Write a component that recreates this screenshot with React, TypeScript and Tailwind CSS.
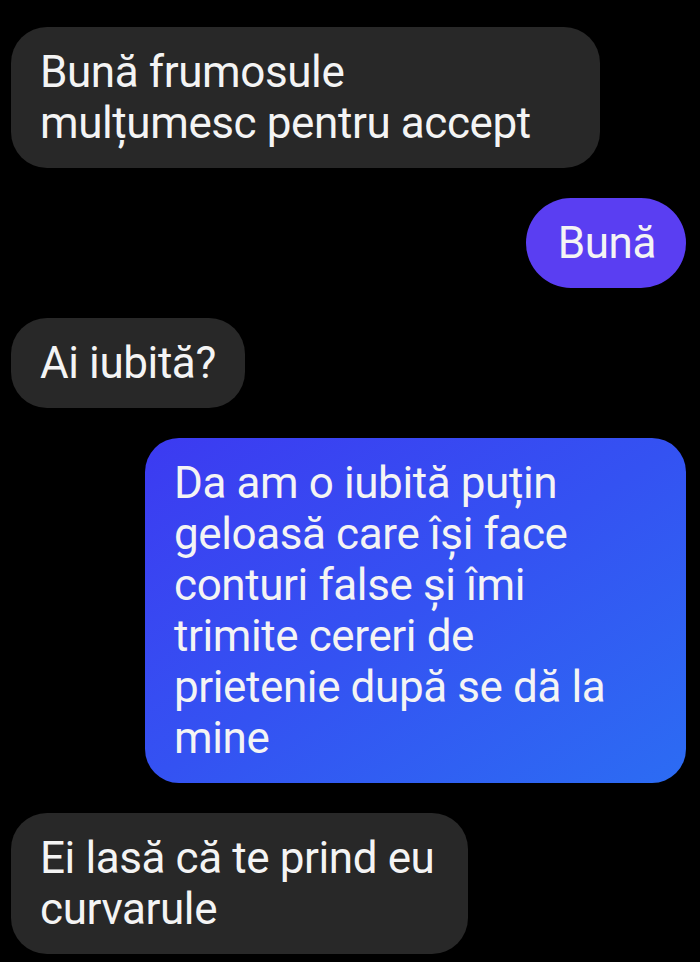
import React from "react";

interface Message {
  id: number;
  mine: boolean;
  lines: string[];
  width: string; // Tailwind width class
}

const messages: Message[] = [
  { id: 1, mine: false, lines: ["Bună frumosule", "mulțumesc pentru accept"], width: "w-[589px]" },
  { id: 2, mine: true, lines: ["Bună"], width: "w-auto" },
  { id: 3, mine: false, lines: ["Ai iubită?"], width: "w-[234px]" },
  {
    id: 4,
    mine: true,
    lines: [
      "Da am o iubită puțin",
      "geloasă care își face",
      "conturi false și îmi",
      "trimite cereri de",
      "prietenie după se dă la",
      "mine",
    ],
    width: "w-[541px]",
  },
  { id: 5, mine: false, lines: ["Ei lasă că te prind eu", "curvarule"], width: "w-[457px]" },
];

export default function App() {
  return (
    <div className="min-h-[962px] w-[700px] bg-black pt-[27px] pl-[11px] pr-[14px] font-['Roboto',_sans-serif] text-[44px] leading-[51px] tracking-[-0.4px] text-[#f4f4f4]">
      <div className="flex flex-col gap-[30px]">
        {messages.map((m) => {
          // single-word reply is a pill, long own message gets the blue gradient
          let bubble = "bg-[#282828] rounded-[36px] pl-[29px] pr-[20px]";
          if (m.mine && m.lines.length === 1) {
            bubble = "bg-[#5a3ef2] rounded-full pl-[32px] pr-[30px]";
          } else if (m.mine) {
            bubble = "bg-gradient-to-br from-[#3c3af1] via-[#3452f2] to-[#2c6cf3] rounded-[34px] pl-[29px] pr-[20px]";
          }
          return (
            <div key={m.id} className={`flex ${m.mine ? "justify-end" : "justify-start"}`}>
              <div className={`${m.width} ${bubble} pt-[20px] pb-[19px]`}>
                {m.lines.map((line, i) => (
                  <div key={i} className="whitespace-nowrap">
                    {line}
                  </div>
                ))}
              </div>
            </div>
          );
        })}
      </div>
    </div>
  );
}
